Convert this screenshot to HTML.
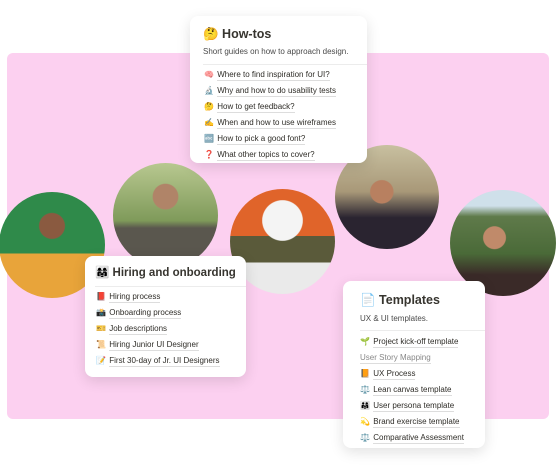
<!DOCTYPE html>
<html><head><meta charset="utf-8"><style>
*{margin:0;padding:0;box-sizing:border-box}
body{width:556px;height:473px;background:#fff;position:relative;overflow:hidden;font-family:"Liberation Sans","Noto Sans CJK JP",sans-serif;color:#37352f}
.pink{position:absolute;left:7px;top:53px;width:542px;height:366px;background:#fcd0f0;border-radius:6px}
.c{position:absolute;border-radius:50%;overflow:hidden}
.card{position:absolute;background:#fff;border-radius:8px;box-shadow:0 4px 14px rgba(0,0,0,.12)}
.t{position:absolute;font-size:12.5px;font-weight:bold;color:#37352f;white-space:nowrap}
.s{position:absolute;font-size:8px;color:#4a4a4a;white-space:nowrap}
.hr{position:absolute;height:1px;background:#ececec}
.i{position:absolute;font-size:8px;white-space:nowrap;color:#2f2d28}
.i u{text-decoration:none;border-bottom:1px solid #ddd;padding-bottom:1px}
.e{display:inline-block;width:11px;font-size:8px}
</style></head><body>
<div class="pink"></div>
<div class="c" style="left:-1px;top:192px;width:106px;height:106px;background:radial-gradient(circle at 50% 32%,#8a5a40 0 14%,transparent 15%),linear-gradient(#2f8a4a 0 58%,#e8a43a 58%)"></div>
<div class="c" style="left:113px;top:163px;width:105px;height:105px;background:radial-gradient(circle at 50% 32%,#b08468 0 14%,transparent 15%),linear-gradient(#b8c890 0,#7f9a5a 55%,#5a574e 62%)"></div>
<div class="c" style="left:230px;top:189px;width:105px;height:105px;background:radial-gradient(circle at 50% 30%,#f4f4f4 0 22%,transparent 23%),linear-gradient(#e0642a 0 45%,#5a5a3a 45% 70%,#eaeaea 70%)"></div>
<div class="c" style="left:335px;top:145px;width:104px;height:104px;background:radial-gradient(circle at 45% 45%,#b88060 0 14%,transparent 15%),linear-gradient(#c8c0a0 0,#a89878 45%,#2a2430 70%)"></div>
<div class="c" style="left:450px;top:190px;width:106px;height:106px;background:radial-gradient(circle at 42% 45%,#c08a6a 0 13%,transparent 14%),linear-gradient(#cfe0ea 0 15%,#5f7a4a 25%,#4a6a38 60%,#3a2a28 80%)"></div>

<div class="card" style="left:190px;top:16px;width:177px;height:147px">
<div class="t" style="left:13px;top:11px">🤔 How-tos</div>
<div class="s" style="left:13px;top:31px">Short guides on how to approach design.</div>
<div class="hr" style="left:13px;right:0;top:48px"></div>
<div class="i" style="left:14px;top:54px"><span class="e">🧠</span> <u>Where to find inspiration for UI?</u></div>
<div class="i" style="left:14px;top:70px"><span class="e">🔬</span> <u>Why and how to do usability tests</u></div>
<div class="i" style="left:14px;top:86px"><span class="e">🤔</span> <u>How to get feedback?</u></div>
<div class="i" style="left:14px;top:102px"><span class="e">✍️</span> <u>When and how to use wireframes</u></div>
<div class="i" style="left:14px;top:118px"><span class="e">🔤</span> <u>How to pick a good font?</u></div>
<div class="i" style="left:14px;top:134px"><span class="e" style="color:#d22">❓</span> <u>What other topics to cover?</u></div>
</div>

<div class="card" style="left:85px;top:256px;width:161px;height:121px">
<div class="t" style="left:10px;top:9px;font-size:11.5px">👩‍👩‍👧 Hiring and onboarding</div>
<div class="hr" style="left:10px;right:0;top:30px"></div>
<div class="i" style="left:11px;top:36px"><span class="e">📕</span> <u>Hiring process</u></div>
<div class="i" style="left:11px;top:52px"><span class="e">📸</span> <u>Onboarding process</u></div>
<div class="i" style="left:11px;top:68px"><span class="e">🎫</span> <u>Job descriptions</u></div>
<div class="i" style="left:11px;top:84px"><span class="e">📜</span> <u>Hiring Junior UI Designer</u></div>
<div class="i" style="left:11px;top:100px"><span class="e">📝</span> <u>First 30-day of Jr. UI Designers</u></div>
</div>

<div class="card" style="left:343px;top:281px;width:142px;height:167px">
<div class="t" style="left:17px;top:12px">📄 Templates</div>
<div class="s" style="left:17px;top:33px">UX &amp; UI templates.</div>
<div class="hr" style="left:17px;right:0;top:49px"></div>
<div class="i" style="left:17px;top:56px"><span class="e">🌱</span> <u>Project kick-off template</u></div>
<div class="i" style="left:17px;top:72px;color:#888"><u>User Story Mapping</u></div>
<div class="i" style="left:17px;top:88px"><span class="e">📙</span> <u>UX Process</u></div>
<div class="i" style="left:17px;top:104px"><span class="e">⚖️</span> <u>Lean canvas template</u></div>
<div class="i" style="left:17px;top:120px"><span class="e">👨‍👩‍👧</span> <u>User persona template</u></div>
<div class="i" style="left:17px;top:136px"><span class="e">💫</span> <u>Brand exercise template</u></div>
<div class="i" style="left:17px;top:152px"><span class="e">⚖️</span> <u>Comparative Assessment</u></div>
</div>
</body></html>
